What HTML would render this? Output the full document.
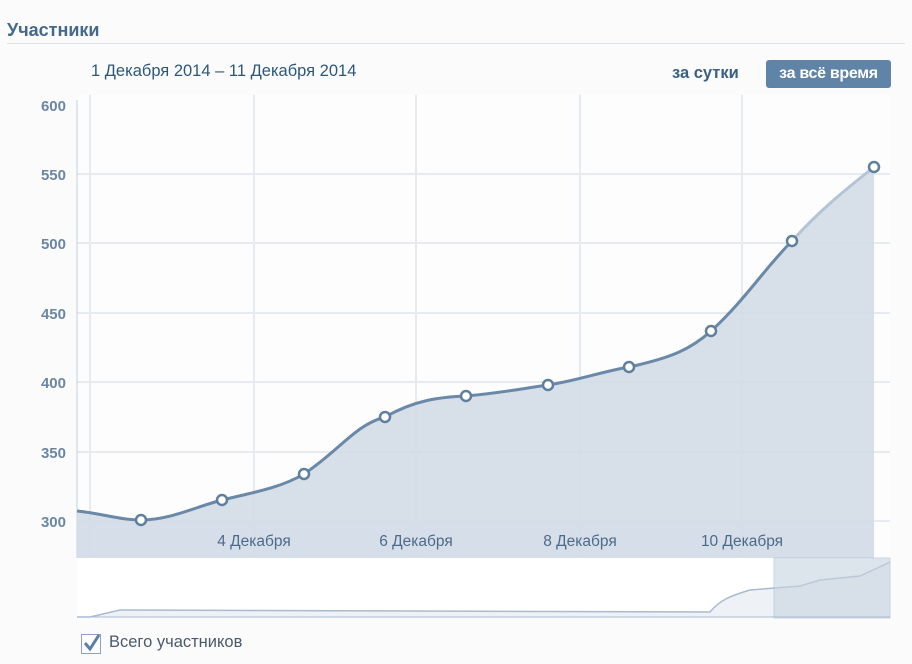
<!DOCTYPE html><html><head><meta charset="utf-8"><style>
body{margin:0;width:912px;height:664px;background:#fbfbfb;font-family:"Liberation Sans","DejaVu Sans",sans-serif;position:relative;overflow:hidden}
.t{position:absolute;left:7px;top:20px;font-weight:bold;font-size:18px;color:#45688e}
.hr{position:absolute;left:7px;top:43px;width:898px;height:1px;background:#dae1e8}
.d{position:absolute;left:91px;top:62px;font-size:16.5px;color:#2b587a}
.s{position:absolute;left:672px;top:64px;font-size:16.5px;font-weight:bold;color:#3b5f82}
.b{position:absolute;left:766px;top:60px;width:125px;height:28px;background:#6083a8;border-radius:3px;color:#fff;font-size:16px;font-weight:bold;line-height:28px;text-align:center;letter-spacing:-0.3px}
.cb{position:absolute;left:81px;top:634px;width:18px;height:18px;border:1px solid #8aa3be;background:#fff}
.l{position:absolute;left:109px;top:633px;font-size:16.5px;color:#4a5a6c}
</style></head><body>
<div class="t">Участники</div><div class="hr"></div>
<div class="d">1 Декабря 2014 – 11 Декабря 2014</div>
<div class="s">за сутки</div><div class="b">за всё время</div>
<svg width="912" height="664" style="position:absolute;left:0;top:0" font-family="Liberation Sans, DejaVu Sans, sans-serif">
<rect x="77" y="95" width="813" height="463" fill="#fdfdfe"/>
<g stroke="#e6eaf1" stroke-width="2">
<line x1="90" y1="95" x2="90" y2="558"/><line x1="254" y1="95" x2="254" y2="558"/><line x1="416" y1="95" x2="416" y2="558"/><line x1="580" y1="95" x2="580" y2="558"/><line x1="742" y1="95" x2="742" y2="558"/>
<line x1="77" y1="174" x2="890" y2="174"/><line x1="77" y1="243" x2="890" y2="243"/><line x1="77" y1="313" x2="890" y2="313"/><line x1="77" y1="382" x2="890" y2="382"/><line x1="77" y1="452" x2="890" y2="452"/><line x1="77" y1="521" x2="890" y2="521"/>
</g>
<line x1="77" y1="100" x2="77" y2="558" stroke="#c5d0dc" stroke-width="1"/>
<path d="M77,511 C105,514 120,520 141,520 C170,520 195,507 222,500 C255,492 280,488 304,474 C340,450 355,425 385,417 C415,400 440,397 466,396 C500,393 520,389 548,385 C580,380 600,372 629,367 C670,358 690,350 711,331 C745,300 765,268 792,241 C820,210 845,190 874,167 L874,558 L77,558 Z" fill="#d3dce6" opacity="0.9"/>
<rect x="77" y="521" width="797" height="37" fill="#d6dfe9" opacity="0.6"/>
<path d="M77,511 C105,514 120,520 141,520 C170,520 195,507 222,500 C255,492 280,488 304,474 C340,450 355,425 385,417 C415,400 440,397 466,396 C500,393 520,389 548,385 C580,380 600,372 629,367 C670,358 690,350 711,331 C745,300 765,268 792,241" fill="none" stroke="#6a88a8" stroke-width="3"/>
<path d="M792,241 C820,210 845,190 874,167" fill="none" stroke="#b3c4d6" stroke-width="3"/>
<g fill="#fff" stroke="#5f7f9f" stroke-width="2.5">
<circle cx="141" cy="520" r="5"/><circle cx="222" cy="500" r="5"/><circle cx="304" cy="474" r="5"/><circle cx="385" cy="417" r="5"/><circle cx="466" cy="396" r="5"/><circle cx="548" cy="385" r="5"/><circle cx="629" cy="367" r="5"/><circle cx="711" cy="331" r="5"/><circle cx="792" cy="241" r="5"/><circle cx="874" cy="167" r="5"/></g>
<g font-size="15" fill="#6b86a3" font-weight="bold" text-anchor="end">
<text x="66" y="111">600</text><text x="66" y="180">550</text><text x="66" y="249">500</text><text x="66" y="319">450</text><text x="66" y="388">400</text><text x="66" y="458">350</text><text x="66" y="527">300</text></g>
<g font-size="15.5" fill="#4c6a8a" text-anchor="middle">
<text x="254" y="546">4 Декабря</text><text x="416" y="546">6 Декабря</text><text x="580" y="546">8 Декабря</text><text x="742" y="546">10 Декабря</text></g>
<rect x="77" y="558" width="813" height="60" fill="#fff"/>
<path d="M77,617 L90,617 L120,610 L710,612 C720,600 730,596 750,590 L775,588 L800,586 L820,580 L860,576 L890,562 L890,617 Z" fill="#eef2f6"/>
<path d="M77,617 L90,617 L120,610 L710,612 C720,600 730,596 750,590 L775,588 L800,586 L820,580 L860,576 L890,562" fill="none" stroke="#a9bbcf" stroke-width="1.5"/>
<rect x="774" y="558" width="116" height="60" fill="#c8d4e1" opacity="0.6" stroke="#a9bbcf"/>
<line x1="77" y1="617" x2="890" y2="617" stroke="#a9bbcf"/>
</svg>
<div class="cb"></div>
<svg width="20" height="20" style="position:absolute;left:82px;top:633px"><path d="M3,10 L8,16 L17,2" fill="none" stroke="#5b7fa6" stroke-width="3"/></svg>
<div class="l">Всего участников</div>
</body></html>
